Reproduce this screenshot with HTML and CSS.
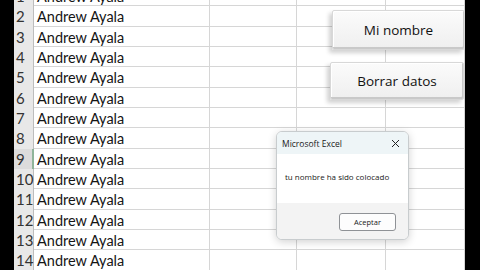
FILE: index.html
```html
<!DOCTYPE html>
<html lang="es">
<head>
  <meta charset="UTF-8">
  <title>Mi nombre - Excel</title>
  <link rel="stylesheet" href="styles.css">
</head>
<body>
  <div class="screen">
    <div class="edge"></div>
    <div class="sheet">
      <div class="rows" id="rows"></div>

      <button class="macro-btn btn-name">Mi nombre</button>
      <button class="macro-btn btn-clear">Borrar datos</button>

      <div class="msgbox">
        <div class="msgbox-title">
          <span>Microsoft Excel</span>
          <svg class="close" width="9" height="9" viewBox="0 0 9 9">
            <path d="M1 1 L8 8 M8 1 L1 8" stroke="#222" stroke-width="1" fill="none"/>
          </svg>
        </div>
        <div class="msgbox-body">tu nombre ha sido colocado</div>
        <div class="msgbox-foot">
          <button class="ok-btn">Aceptar</button>
        </div>
      </div>
    </div>
    <div class="edge edge-right"></div>
  </div>

  <script>
    const rows = document.getElementById('rows');
    for (let i = 1; i <= 14; i++) {
      const row = document.createElement('div');
      row.className = 'row' + (i === 9 ? ' active' : '');
      row.innerHTML = `
        <div class="head">${i}</div>
        <div class="cell name">Andrew Ayala</div>
        <div class="cell"></div>
        <div class="cell"></div>
        <div class="cell"></div>
      `;
      rows.appendChild(row);
    }
  </script>
</body>
</html>
```

FILE: styles.css
```css
body {
  margin: 0;
  background: #000;
  overflow: hidden;
}

.screen {
  display: flex;
  width: 480px;
  height: 270px;
}

.edge {
  width: 14px;
  background: #000;
}

.edge-right {
  width: 15px;
}

.sheet {
  position: relative;
  width: 451px;
  height: 270px;
  overflow: hidden;
  background: #fff;
}

.rows {
  margin-top: -14px;
}

.row {
  display: grid;
  grid-template-columns: 20px 176px 87px 89px 79px;
  height: 20.33px;
  box-sizing: border-box;
  border-bottom: 1px solid #d6d6d6;
}

.head {
  background: #e8e8e8;
  border-right: 1px solid #bdbdbd;
  color: #333;
  font-family: Lato, "Liberation Sans", sans-serif;
  font-size: 15px;
  line-height: 21px;
  padding-left: 2px;
}

.row.active .head {
  background: #dcdcdc;
  border-right: 2px solid #8fb59a;
}

.cell {
  border-right: 1px solid #d6d6d6;
}

.name {
  font-family: Lato, "Liberation Sans", sans-serif;
  font-size: 14.5px;
  line-height: 21px;
  color: #151515;
  padding-left: 3px;
}

.macro-btn {
  position: absolute;
  border: 1px solid #d8d8d8;
  border-radius: 2px;
  background: linear-gradient(#fbfbfb, #efefef);
  box-shadow: -3px 3px 4px rgba(0,0,0,0.18), inset -1px -2px 0 #c9c9c9, inset 1px 1px 0 #fff;
  font-family: "Open Sans", "Noto Sans", sans-serif;
  font-size: 13.5px;
  color: #111;
  padding: 0;
}

.btn-name {
  left: 318px;
  top: 10px;
  width: 133px;
  height: 40px;
}

.btn-clear {
  left: 316px;
  top: 62px;
  width: 134px;
  height: 38px;
}

.msgbox {
  position: absolute;
  left: 262px;
  top: 131px;
  width: 131px;
  height: 107px;
  border: 1px solid #c8ccce;
  border-radius: 6px;
  overflow: hidden;
  background: #fff;
  box-shadow: 0 2px 8px rgba(0,0,0,0.18);
  display: flex;
  flex-direction: column;
  font-family: "Open Sans", "Noto Sans", sans-serif;
  color: #1a1a1a;
}

.msgbox-title {
  display: flex;
  justify-content: space-between;
  align-items: center;
  height: 22px;
  padding: 0 8px 0 5px;
  background: #eef5f7;
  font-size: 8.5px;
}

.msgbox-body {
  flex: 1;
  padding: 17px 0 0 8px;
  font-size: 8px;
}

.msgbox-foot {
  display: flex;
  justify-content: flex-end;
  height: 36px;
  padding: 10px 12px 0 0;
  box-sizing: border-box;
  background: #f3f3f3;
}

.ok-btn {
  width: 57px;
  height: 18px;
  padding: 0;
  border: 1px solid #8f9296;
  border-radius: 3px;
  background: #fdfdfd;
  font-family: "Open Sans", "Noto Sans", sans-serif;
  font-size: 7.5px;
  color: #1a1a1a;
}
```
